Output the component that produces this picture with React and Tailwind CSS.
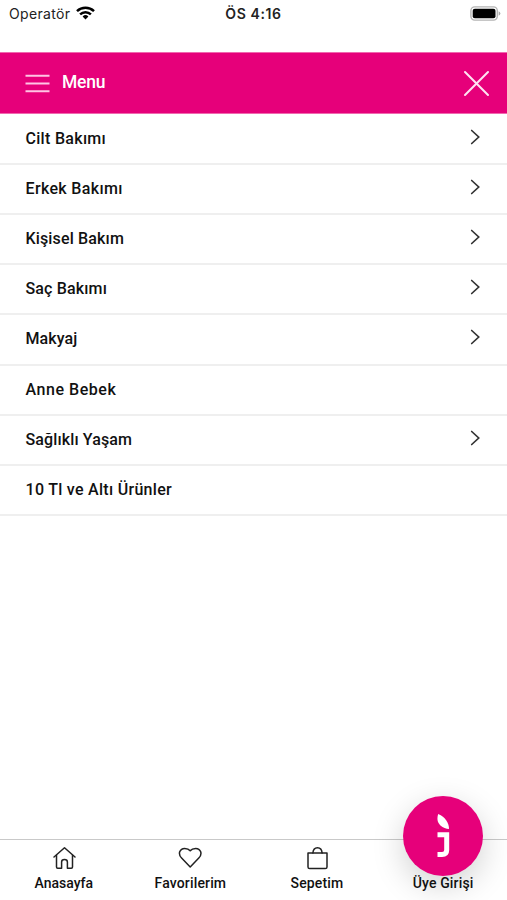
import React from "react";

const menuItems = [
  { label: "Cilt Bakımı", hasChildren: true, spacing: "tracking-[0.3px]" },
  { label: "Erkek Bakımı", hasChildren: true, spacing: "tracking-[0.34px]" },
  { label: "Kişisel Bakım", hasChildren: true, spacing: "tracking-[0.15px]" },
  { label: "Saç Bakımı", hasChildren: true, spacing: "tracking-[0.15px]" },
  { label: "Makyaj", hasChildren: true, spacing: "tracking-[0.1px]" },
  { label: "Anne Bebek", hasChildren: false, spacing: "tracking-[0.54px]" },
  { label: "Sağlıklı Yaşam", hasChildren: true, spacing: "tracking-[0.12px]" },
  { label: "10 Tl ve Altı Ürünler", hasChildren: false, spacing: "tracking-[0.29px]" },
];

function StatusBar() {
  return (
    <div className="grid h-[52px] shrink-0 grid-cols-3 items-start pt-[3px] font-[Inter,sans-serif] text-[#222]">
      <div className="flex h-5 items-center gap-1.5 pl-[9px]">
        <span className="text-[14px] tracking-[0.35px]">Operatör</span>
        <svg width="19" height="14" viewBox="0 0 19 14" fill="none" stroke="#000" strokeWidth="2.5">
          <path d="M1 5.1a12.3 12.3 0 0 1 17 0" />
          <path d="M4.1 8.4a7.8 7.8 0 0 1 10.8 0" />
          <path d="M6.6 10.4a4.1 4.1 0 0 1 5.8 0L9.5 13.6z" fill="#000" stroke="none" />
        </svg>
      </div>
      <div className="flex h-5 items-center justify-center">
        <span className="text-[14px] font-semibold tracking-[0.6px]">ÖS 4:16</span>
      </div>
      <div className="flex h-5 items-center justify-end pr-1.5">
        <svg width="31" height="15" viewBox="0 0 31 15">
          <rect x="0.9" y="0.9" width="26.4" height="13.2" rx="3.8" fill="none" stroke="#b4b4b4" strokeWidth="1.4" />
          <rect x="2.7" y="2.7" width="22.8" height="9.6" rx="2.1" fill="#000" />
          <path d="M28.6 5.2q1.8.8 1.8 2.3t-1.8 2.3z" fill="#a9a9a9" />
        </svg>
      </div>
    </div>
  );
}

function MenuHeader() {
  return (
    <header className="flex h-[62px] shrink-0 items-center border-y border-t-[#f068af] border-b-[#f068af] bg-[#e6007a] pr-[17px] pl-[25px] text-white">
      <svg width="25" height="19" viewBox="0 0 25 19" stroke="#ffc4e4" strokeWidth="2">
        <path d="M.5 1.7h24M.5 9.5h24M.5 17.2h24" />
      </svg>
      <span className="mb-0.5 ml-3 text-[17.5px] font-medium tracking-[-0.2px]">Menu</span>
      <button type="button" aria-label="Kapat" className="ml-auto">
        <svg width="27" height="27" viewBox="0 0 27 27" stroke="#ffe3f3" strokeWidth="2" strokeLinecap="round">
          <path d="M2 2l23 23M25 2L2 25" />
        </svg>
      </button>
    </header>
  );
}

function MenuRow({ label, hasChildren, spacing }) {
  return (
    <li className="flex h-[50.15px] items-center justify-between border-b-2 border-[#efefef] pr-[26px] pl-[25.5px]">
      <span className={`text-[16px] leading-6 font-medium ${spacing}`}>{label}</span>
      {hasChildren && (
        <svg className="mb-1" width="12" height="16" viewBox="0 0 12 16" fill="none" stroke="#333" strokeWidth="1.7" strokeLinecap="round">
          <path d="M2.7 1.5L9.7 8l-7 6.5" />
        </svg>
      )}
    </li>
  );
}

const tabIcons = {
  home: (
    <>
      <path d="M2 11L12.5 1.7 23 11" />
      <path d="M4.5 9.3v11.7q0 1.2 1.2 1.2h3.9v-6.2q0-2.4 2.9-2.4t2.9 2.4v6.2h3.9q1.2 0 1.2-1.2V9.3" />
    </>
  ),
  heart: <path d="M12.2 21L3.6 12.1Q.7 9 1.7 5.8 3 2.4 6.7 2.4q3.7 0 5.5 2.4 1.8-2.4 5.5-2.4 3.7 0 5 3.4 1 3.2-1.9 6.3z" />,
  bag: (
    <>
      <path d="M3 7h19v13.9q0 1.7-1.7 1.7H4.7Q3 22.6 3 20.9z" />
      <path d="M7.9 7q.3-5.3 4.6-5.3T17.1 7" />
    </>
  ),
};

function Tab({ icon, label, spacing }) {
  return (
    <div className="flex w-[126.6px] flex-col items-center pt-1.5 pl-px">
      <svg width="24" height="24" viewBox="0 0 24 24" fill="none" stroke="#222" strokeWidth="1.5" strokeLinejoin="round" strokeLinecap="round">
        {tabIcons[icon]}
      </svg>
      <span className={`mt-[3px] text-[14px] leading-5 font-medium ${spacing}`}>{label}</span>
    </div>
  );
}

function LoginTab() {
  return (
    <div className="relative flex w-[126.6px] flex-col items-center pt-[33px]">
      <div className="absolute -top-11 left-[23px] flex h-20 w-20 items-center justify-center rounded-full bg-[#e6007a] shadow-[0_10px_32px_rgba(0,0,0,0.18)]">
        <svg width="16" height="46" viewBox="0 0 16 46" fill="none">
          <path d="M3.2 1C1.8 5.5 2.2 9.500 5.500 12.500 8 14.700 11 15.800 14 16 14 10 10.500 4 3.200 1z" fill="#fff" />
          <path d="M2.500 21.800h9.200v15.200q0 4.400-4.600 4.400H2.500" stroke="#fff" strokeWidth="5" />
        </svg>
      </div>
      <span className="relative text-[14px] leading-5 font-medium tracking-[0.15px]">Üye Girişi</span>
    </div>
  );
}

export default function App() {
  return (
    <div className="flex h-[900px] w-[507px] flex-col overflow-hidden bg-white font-[Roboto,sans-serif] text-[#111]">
      <StatusBar />
      <MenuHeader />
      <ul className="flex-1 pt-[0.8px]">
        {menuItems.map((item) => (
          <MenuRow key={item.label} {...item} />
        ))}
      </ul>
      <nav className="flex h-[61px] shrink-0 border-t border-[#c9c9c9]">
        <Tab icon="home" label="Anasayfa" spacing="tracking-[0px]" />
        <Tab icon="heart" label="Favorilerim" spacing="tracking-[0.15px]" />
        <Tab icon="bag" label="Sepetim" spacing="tracking-[0.15px]" />
        <LoginTab />
      </nav>
    </div>
  );
}
